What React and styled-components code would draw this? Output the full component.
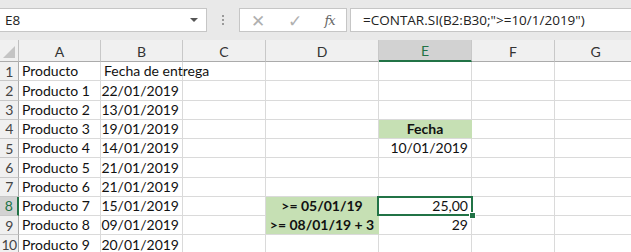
import React from "react";
import styled, { createGlobalStyle } from "styled-components";

const GlobalStyle = createGlobalStyle`
  body {
    margin: 0;
    overflow: hidden;
    background: #ffffff;
  }
`;

const green = "#217346";
const grid = "#dadada";

const Window = styled.div`
  width: 631px;
  height: 252px;
  overflow: hidden;
  font-family: Lato, "Liberation Sans", sans-serif;
`;

const FormulaBar = styled.div`
  display: flex;
  align-items: flex-start;
  height: 40px;
  box-sizing: border-box;
  padding-top: 8px;
  background: #e9e9e9;
`;

const NameBox = styled.div`
  display: flex;
  align-items: center;
  justify-content: space-between;
  width: 207px;
  height: 24px;
  box-sizing: border-box;
  padding: 0 8px 0 5px;
  background: #fff;
  border: 1px solid #c6c6c6;
  border-left: none;
  font-family: "Open Sans", sans-serif;
  font-size: 13.5px;
  color: #222;
`;

const Arrow = styled.span`
  width: 0;
  height: 0;
  border-left: 4px solid transparent;
  border-right: 4px solid transparent;
  border-top: 4px solid #555;
`;

const Dots = styled.div`
  display: flex;
  flex-direction: column;
  gap: 2px;
  width: 32px;
  align-items: center;
  padding-top: 7px;
  & span {
    width: 2px;
    height: 2px;
    background: #9a9a9a;
  }
`;

const Buttons = styled.div`
  display: flex;
  align-items: center;
  justify-content: space-around;
  width: 108px;
  height: 24px;
  box-sizing: border-box;
  background: #fff;
  border: 1px solid #c6c6c6;
  margin-right: 3px;
  color: #b0b0b0;
`;

const ToolGlyph = styled.span`
  font-size: 17px;
  line-height: 1;
`;

const Fx = styled.span`
  font-family: "DejaVu Serif", "Liberation Serif", serif;
  font-style: italic;
  font-size: 13px;
  color: #666;
  letter-spacing: -1px;
`;

const FormulaBox = styled.div`
  flex: 1;
  height: 24px;
  box-sizing: border-box;
  padding: 0 0 0 12px;
  display: flex;
  align-items: center;
  background: #fff;
  border: 1px solid #c6c6c6;
  border-right: none;
  font-family: "Open Sans", sans-serif;
  font-size: 13.5px;
  color: #222;
  white-space: nowrap;
`;

const Sheet = styled.div`
  display: grid;
  grid-template-columns: 19px 82px 82px 83px 113px 93px 83px 82px;
  grid-template-rows: 22px repeat(10, 19.25px);
`;

const Corner = styled.div`
  position: relative;
  background: #f0f0f0;
  border-right: 1px solid #c0c0c0;
  border-bottom: 1px solid #ababab;
  &::after {
    content: "";
    position: absolute;
    right: 3px;
    bottom: 3px;
    border-left: 12px solid transparent;
    border-bottom: 12px solid #c4c4c4;
  }
`;

const ColHead = styled.div`
  display: flex;
  align-items: center;
  justify-content: center;
  box-sizing: border-box;
  background: ${(p) => (p.$active ? "#d2d2d2" : "#f0f0f0")};
  border-right: 1px solid #c8c8c8;
  border-bottom: ${(p) => (p.$active ? `2px solid ${green}` : "1px solid #ababab")};
  font-size: 14px;
  color: ${(p) => (p.$active ? green : "#333")};
  padding-top: 1px;
`;

const RowHead = styled.div`
  display: flex;
  align-items: center;
  justify-content: center;
  box-sizing: border-box;
  background: ${(p) => (p.$active ? "#d2d2d2" : "#f0f0f0")};
  border-right: ${(p) => (p.$active ? `2px solid ${green}` : "1px solid #ababab")};
  border-bottom: 1px solid #c8c8c8;
  font-size: 14px;
  color: ${(p) => (p.$active ? green : "#444")};
  letter-spacing: -0.5px;
`;

const Cell = styled.div`
  position: relative;
  display: flex;
  align-items: flex-end;
  justify-content: ${(p) =>
    p.$align === "right" ? "flex-end" : p.$align === "center" ? "center" : "flex-start"};
  box-sizing: border-box;
  padding: 0 3px 1px 3px;
  background: ${(p) => p.$fill || "#fff"};
  border-right: 1px solid ${(p) => (p.$fill ? p.$fill : grid)};
  border-bottom: 1px solid ${(p) => (p.$fill && p.$joinDown ? p.$fill : grid)};
  font-size: 14px;
  font-weight: ${(p) => (p.$bold ? 700 : 400)};
  color: #111;
  white-space: nowrap;
  overflow: ${(p) => (p.$spill || p.$selected ? "visible" : "hidden")};
  z-index: ${(p) => (p.$selected ? 2 : p.$spill ? 1 : 0)};

  ${(p) =>
    p.$selected &&
    `
    &::before {
      content: "";
      position: absolute;
      left: -2px;
      top: -1px;
      right: -2px;
      bottom: -1px;
      border: 2px solid ${green};
    }
    &::after {
      content: "";
      position: absolute;
      right: -5px;
      bottom: -4px;
      width: 5px;
      height: 5px;
      background: ${green};
      border: 1px solid #fff;
    }
  `}
`;

const CellText = styled.span`
  position: relative;
  z-index: 1;
`;

const columns = ["A", "B", "C", "D", "E", "F", "G"];

const products = [
  ["Producto", "Fecha de entrega"],
  ["Producto 1", "22/01/2019"],
  ["Producto 2", "13/01/2019"],
  ["Producto 3", "19/01/2019"],
  ["Producto 4", "14/01/2019"],
  ["Producto 5", "21/01/2019"],
  ["Producto 6", "21/01/2019"],
  ["Producto 7", "15/01/2019"],
  ["Producto 8", "09/01/2019"],
  ["Producto 9", "20/01/2019"],
];

const lightGreen = "#c6e0b4";

const extra = {
  "4E": { text: "Fecha", align: "center", bold: true, fill: lightGreen },
  "5E": { text: "10/01/2019", align: "right" },
  "8D": { text: ">= 05/01/19", align: "center", bold: true, fill: lightGreen, joinDown: true },
  "9D": { text: ">= 08/01/19 + 3", align: "center", bold: true, fill: lightGreen },
  "8E": { text: "25,00", align: "right", selected: true },
  "9E": { text: "29", align: "right" },
};

function renderCell(row, col) {
  const key = `${row}${col}`;
  const idx = row - 1;
  if (col === "A") {
    return (
      <Cell key={key}>
        <CellText>{products[idx][0]}</CellText>
      </Cell>
    );
  }
  if (col === "B") {
    const header = row === 1;
    return (
      <Cell key={key} $align={header ? "left" : "right"} $spill={header}>
        <CellText>{products[idx][1]}</CellText>
      </Cell>
    );
  }
  const e = extra[key];
  if (e) {
    return (
      <Cell
        key={key}
        $align={e.align}
        $bold={e.bold}
        $fill={e.fill}
        $joinDown={e.joinDown}
        $selected={e.selected}
      >
        <CellText>{e.text}</CellText>
      </Cell>
    );
  }
  return <Cell key={key} />;
}

export default function App() {
  const rows = Array.from({ length: 10 }, (_, i) => i + 1);
  return (
    <Window>
      <GlobalStyle />
      <FormulaBar>
        <NameBox>
          E8
          <Arrow />
        </NameBox>
        <Dots>
          <span />
          <span />
          <span />
        </Dots>
        <Buttons>
          <ToolGlyph>✕</ToolGlyph>
          <ToolGlyph>✓</ToolGlyph>
          <Fx>fx</Fx>
        </Buttons>
        <FormulaBox>=CONTAR.SI(B2:B30;"&gt;=10/1/2019")</FormulaBox>
      </FormulaBar>
      <Sheet>
        <Corner />
        {columns.map((c) => (
          <ColHead key={c} $active={c === "E"}>
            {c}
          </ColHead>
        ))}
        {rows.map((r) => (
          <React.Fragment key={r}>
            <RowHead $active={r === 8}>{r}</RowHead>
            {columns.map((c) => renderCell(r, c))}
          </React.Fragment>
        ))}
      </Sheet>
    </Window>
  );
}
